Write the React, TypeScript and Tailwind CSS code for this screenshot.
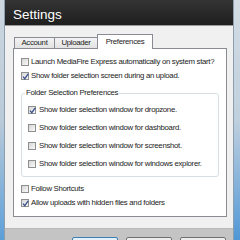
import React from 'react'

const font = "font-['Liberation_Sans',Arial,sans-serif]"
const small = 'text-[7.8px] tracking-[-0.3px] text-[#1b1b1b]'

function CheckBox({ checked }: { checked?: boolean }) {
  return (
    <span className="relative w-[8px] h-[8px] shrink-0 border border-[#8e8f8f] bg-linear-to-br from-[#d6d6d6] to-[#fafafa]">
      {checked && (
        <svg className="absolute -left-[1px] -top-[1px]" width="9" height="9" viewBox="0 0 9 9">
          <path d="M2 4.6 L3.8 6.6 L7.2 1.8" fill="none" stroke="#3a4f8c" strokeWidth="1.3" />
        </svg>
      )}
    </span>
  )
}

function Row({ label, checked, h = 'h-[14px]', gap = 'gap-[2px]' }: { label: string; checked?: boolean; h?: string; gap?: string }) {
  return (
    <div className={`flex items-center ${h} ${gap}`}>
      <CheckBox checked={checked} />
      <span className={`${small} whitespace-nowrap leading-none`}>{label}</span>
    </div>
  )
}

export default function App() {
  const tabs = ['Account', 'Uploader', 'Preferences']

  return (
    <div className={`w-[240px] h-[240px] overflow-hidden flex ${font}`}>
      {/* left glass frame */}
      <div className="w-[5px] h-full bg-linear-to-b from-[#cdd7e0] via-[#b9cad8] to-[#5b9fd8] border-r border-[#8d9fae]" />

      <div className="flex-1 flex flex-col">
        {/* Title bar */}
        <div className="h-[26px] bg-linear-to-b from-[#343434] to-[#1f1f1f] pl-[8px] pt-[2px] border-b border-[#9a9a9a]">
          <span className="text-[13.5px] leading-[16px] text-white">Settings</span>
        </div>

        {/* Body */}
        <div className="h-[202px] bg-[#f0f0f0] pt-[8px] pl-[8px] pr-[6px]">
          <div className="flex items-end h-[14px] pl-[1px]">
            {tabs.map((t, i) =>
              t === 'Preferences' ? (
                <div
                  key={t}
                  className={`relative z-10 -ml-px -mb-px h-[15px] w-[56px] bg-white border border-b-0 border-[#898c95] ${small} flex items-center justify-center`}
                >
                  {t}
                </div>
              ) : (
                <div
                  key={t}
                  className={`h-[11px] ${i === 0 ? 'w-[41px]' : '-ml-px w-[44px]'} bg-linear-to-b from-[#f4f4f4] to-[#e2e2e2] border border-b-0 border-[#898c95] ${small} flex items-center justify-center`}
                >
                  {t}
                </div>
              )
            )}
          </div>

          {/* Panel */}
          <div className="h-[169px] bg-white border border-[#898c95] pt-[6px] px-[7px] flex flex-col">
            <Row label="Launch MediaFire Express automatically on system start?" />
            <Row label="Show folder selection screen during an upload." checked />

            <div className="relative mt-[10px] border border-[#d5dfe5] rounded-[3px] pt-[7px] pb-[3px] pl-[6px]">
              <span className={`absolute -top-[6px] left-[3px] px-[1px] bg-white ${small} leading-[10px] whitespace-nowrap`}>
                Folder Selection Preferences
              </span>
              <Row h="h-[18px]" gap="gap-[3px]" label="Show folder selection window for dropzone." checked />
              <Row h="h-[18px]" gap="gap-[3px]" label="Show folder selection window for dashboard." />
              <Row h="h-[18px]" gap="gap-[3px]" label="Show folder selection window for screenshot." />
              <Row h="h-[18px]" gap="gap-[3px]" label="Show folder selection window for windows explorer." />
            </div>

            <div className="mt-[5px]">
              <Row label="Follow Shortcuts" />
              <Row label="Allow uploads with hidden files and folders" checked />
            </div>
          </div>
        </div>

        {/* Bottom button bar */}
        <div className="h-[12px] bg-[#c4c4c4] border-t border-[#b8b8b8] flex justify-end gap-[8px] pr-[7px] pt-[8px] overflow-hidden">
          <div className="w-[46px] h-[20px] shrink-0 rounded-[2px] border border-[#3c7fb1] bg-[#e5f1fb]" />
          <div className="w-[46px] h-[20px] shrink-0 rounded-[2px] border border-[#707070] bg-[#ececec]" />
          <div className="w-[46px] h-[20px] shrink-0 rounded-[2px] border border-[#707070] bg-[#ececec]" />
        </div>
      </div>

      {/* right glass frame */}
      <div className="w-[7px] h-full border-l border-[#8d9fae] bg-linear-to-b from-[#d3dce4] via-[#bfd0de] to-[#4f97d6]" />
    </div>
  )
}
